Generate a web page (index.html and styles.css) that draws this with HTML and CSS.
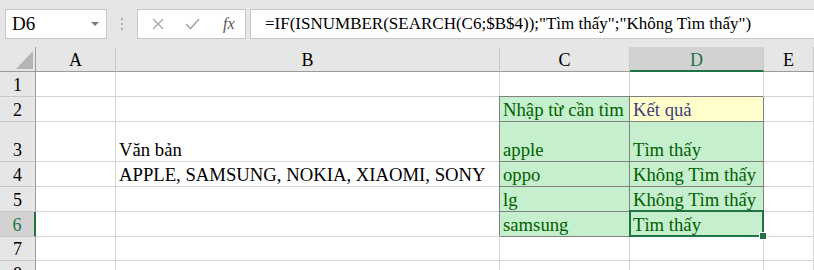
FILE: index.html
```html
<!DOCTYPE html>
<html lang="vi">

<head>
  <meta charset="UTF-8">
  <title>Excel - SEARCH</title>
  <link rel="stylesheet" href="styles.css">
</head>

<body>

  <div class="toolbar">
    <div class="namebox">
      <span>D6</span>
      <svg width="8" height="4" viewBox="0 0 8 4"><path d="M0 0 H8 L4 4 Z" fill="#7a7a7a"/></svg>
    </div>
    <div class="dots"><i></i><i></i><i></i></div>
    <div class="fxbox">
      <svg width="14" height="14" viewBox="0 0 14 14"><path d="M2 2 L12 12 M12 2 L2 12" stroke="#a6a6a6" stroke-width="1.3"/></svg>
      <svg width="15" height="14" viewBox="0 0 15 14"><path d="M1 7 L5.5 11.5 L14 2" stroke="#a6a6a6" stroke-width="1.6" fill="none"/></svg>
      <span class="fx">fx</span>
    </div>
    <div class="formula">=IF(ISNUMBER(SEARCH(C6;$B$4));"Tìm thấy";"Không Tìm thấy")</div>
  </div>

  <div class="sheet">
    <!-- header -->
    <div class="hd corner"><svg width="17" height="18" viewBox="0 0 17 18"><path d="M17 0 V18 H0 Z" fill="#b4b4b4"/></svg></div>
    <div class="hd col">A</div>
    <div class="hd col">B</div>
    <div class="hd col">C</div>
    <div class="hd col active">D</div>
    <div class="hd col">E</div>

    <!-- row 1 -->
    <div class="hd row">1</div>
    <div class="cell"></div>
    <div class="cell"></div>
    <div class="cell"></div>
    <div class="cell"></div>
    <div class="cell"></div>

    <!-- row 2 -->
    <div class="hd row">2</div>
    <div class="cell"></div>
    <div class="cell"></div>
    <div class="cell good">Nhập từ cần tìm</div>
    <div class="cell note">Kết quả</div>
    <div class="cell"></div>

    <!-- row 3 -->
    <div class="hd row">3</div>
    <div class="cell"></div>
    <div class="cell">Văn bản</div>
    <div class="cell good">apple</div>
    <div class="cell good">Tìm thấy</div>
    <div class="cell"></div>

    <!-- row 4 -->
    <div class="hd row">4</div>
    <div class="cell"></div>
    <div class="cell">APPLE, SAMSUNG, NOKIA, XIAOMI, SONY</div>
    <div class="cell good">oppo</div>
    <div class="cell good">Không Tìm thấy</div>
    <div class="cell"></div>

    <!-- row 5 -->
    <div class="hd row">5</div>
    <div class="cell"></div>
    <div class="cell"></div>
    <div class="cell good">lg</div>
    <div class="cell good">Không Tìm thấy</div>
    <div class="cell"></div>

    <!-- row 6 -->
    <div class="hd row active">6</div>
    <div class="cell"></div>
    <div class="cell"></div>
    <div class="cell good">samsung</div>
    <div class="cell good sel">Tìm thấy</div>
    <div class="cell"></div>

    <!-- row 7 -->
    <div class="hd row">7</div>
    <div class="cell"></div>
    <div class="cell"></div>
    <div class="cell"></div>
    <div class="cell"></div>
    <div class="cell"></div>

    <!-- row 8 -->
    <div class="hd row">8</div>
    <div class="cell"></div>
    <div class="cell"></div>
    <div class="cell"></div>
    <div class="cell"></div>
    <div class="cell"></div>
  </div>

</body>

</html>
```

FILE: styles.css
```css
body {
  margin: 0;
  background-color: #e6e6e6;
  font-family: "Liberation Serif", "Times New Roman", serif;
  font-size: 18px;
  color: #000;
  overflow: hidden;
}

/* thanh công thức */
.toolbar {
  display: flex;
  align-items: center;
  height: 47px;
  padding-left: 5px;
  box-sizing: border-box;
}

.namebox,
.fxbox,
.formula {
  height: 30px;
  box-sizing: border-box;
  background-color: #fff;
  border: 1px solid #c6c6c6;
  display: flex;
  align-items: center;
}

.namebox {
  width: 102px;
  padding: 0 7px 0 6px;
  justify-content: space-between;
  font-size: 19px;
}

.dots {
  width: 30px;
  display: flex;
  flex-direction: column;
  align-items: center;
  gap: 3px;
}

.dots i {
  width: 2px;
  height: 2px;
  background-color: #b0b0b0;
}

.fxbox {
  width: 109px;
  padding-left: 13px;
  gap: 20px;
}

.fx {
  font-style: italic;
  font-size: 16px;
  color: #555;
  margin-left: 3px;
}

.formula {
  flex: 1;
  margin-left: 4px;
  margin-right: -10px;
  padding-left: 14px;
  white-space: nowrap;
  font-size: 17px;
}

/* bảng tính */
.sheet {
  display: grid;
  grid-template-columns: 36px 80px 384px 130px 134px 50px;
  grid-template-rows: 25px 25px 25px 40px 25px 25px 25px 24px 25px;
  background-color: #fff;
}

.hd {
  background-color: #e6e6e6;
  box-sizing: border-box;
  display: flex;
  align-items: flex-end;
  justify-content: center;
  padding-bottom: 1px;
  line-height: 20px;
}

.hd.col {
  border-right: 1px solid #c8c8c8;
  border-bottom: 1px solid #9b9b9b;
}

.hd.row {
  border-right: 1px solid #9b9b9b;
  border-bottom: 1px solid #c8c8c8;
}

.hd.corner {
  justify-content: flex-end;
  padding: 0 2px 2px 0;
  border-right: 1px solid #9b9b9b;
  border-bottom: 1px solid #9b9b9b;
}

.hd.active {
  background-color: #d2d2d2;
  color: #217346;
}

.hd.col.active {
  border-bottom: 2px solid #217346;
  padding-bottom: 0;
}

.hd.row.active {
  border-right: 2px solid #217346;
}

.cell {
  box-sizing: border-box;
  border-right: 1px solid #d4d4d4;
  border-bottom: 1px solid #d4d4d4;
  display: flex;
  align-items: flex-end;
  padding: 0 0 1px 3px;
  line-height: 20px;
  white-space: nowrap;
  font-size: 18.7px;
}

.cell.good {
  background-color: #c6efce;
  color: #006100;
  border-color: #808080;
  box-shadow: -1px -1px 0 #808080;
}

.cell.note {
  background-color: #ffffcc;
  color: #3f3f76;
  border-color: #808080;
  box-shadow: -1px -1px 0 #808080;
}

.cell.sel {
  position: relative;
}

.cell.sel::after {
  content: "";
  position: absolute;
  top: -2px;
  left: -1px;
  right: -1px;
  bottom: -1px;
  border: 2px solid #217346;
}

.cell.sel::before {
  content: "";
  position: absolute;
  right: -4px;
  bottom: -4px;
  width: 6px;
  height: 6px;
  background-color: #217346;
  border: 1px solid #fff;
  z-index: 1;
}
```
